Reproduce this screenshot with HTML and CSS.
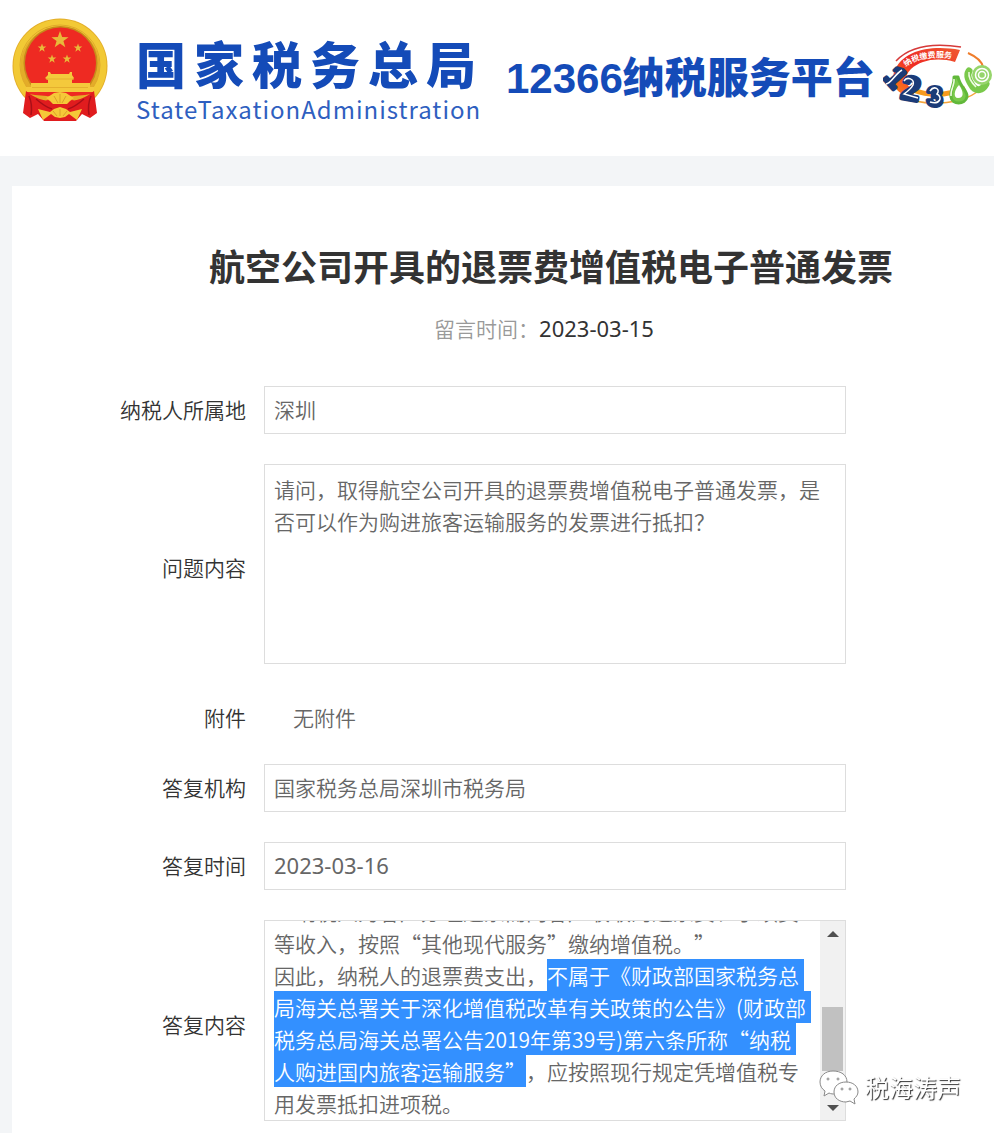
FILE: index.html
```html
<!DOCTYPE html>
<html lang="zh-CN">
<head>
    <meta charset="UTF-8">
    <meta name="viewport" content="width=device-width, initial-scale=1.0">
    <title>12366纳税服务平台</title>
    <link rel="stylesheet" href="styles.css">
    <script src="script.js" defer></script>
</head>
<body>
    <header class="header">
        <svg class="emblem" viewBox="0 0 96 104" aria-hidden="true">
            <defs>
                <path id="star" d="M0-10 2.4-3.2 9.5-3.1 3.8 1.2 5.9 8.1 0 4-5.9 8.1-3.8 1.2-9.5-3.1-2.4-3.2z"/>
            </defs>
            <circle cx="48" cy="48" r="47.500" fill="#e3ad28"/>
            <circle cx="48" cy="48" r="43" fill="none" stroke="#f2c935" stroke-width="7"/>
            <circle cx="48" cy="47" r="40" fill="none" stroke="#e0a92a" stroke-width="1"/>
            <circle cx="48.500" cy="45" r="37" fill="#c78a1b"/>
            <circle cx="48.500" cy="45" r="35.500" fill="#ee2a22"/>
            <g fill="#e8b93a">
                <use href="#star" transform="translate(48 22) scale(.9)"/>
                <use href="#star" transform="translate(30 30) scale(.45)"/>
                <use href="#star" transform="translate(66 30) scale(.45)"/>
                <use href="#star" transform="translate(40 41) scale(.45)"/>
                <use href="#star" transform="translate(55 41) scale(.45)"/>
            </g>
            <path fill="#f4c93c" d="M36 54h2l1 2h18l1-2h2v3l2 3-2 2v3h-24v-3l-3-2 3-3zM19 65h59v4h4v5H14v-5h5z"/>
            <path d="M34 61h28M20 69.500h56" stroke="#e5b02e" stroke-width="1"/>
            <path fill="#ee2a22" d="M14 74h68l-8 9H22z"/>
            <path fill="#e5ae29" d="M17 76c8 2 16 1 23 3l-8 5c-6-1-11-4-15-8zM79 76c-8 2-16 1-23 3l8 5c6-1 11-4 15-8z"/>
            <path fill="#e01c1e" d="M14 73c8 7 18 10 26 10h16c8 0 18-3 26-10l3 22-7 5-8-4-6 7H32l-6-7-8 4-7-5z"/>
            <path d="M17 78c3 7 3 13 2 19M79 78c-3 7-3 13-2 19M24 81c7 6 12 9 16 10M72 81c-7 6-12 9-16 10" fill="none" stroke="#a90f18" stroke-width="1.500"/>
            <path fill="#f5c838" d="M34 80l5-3 3-2 6-1 6 1 3 2 5 3-4 3-3 3h-14l-3-3zM26 91l12 3 4-3 6-2 6 2 4 3 12-3-5 11-8-6-4 3-5 1-5-1-4-3-8 6z"/>
            <path d="M42 78l4 7M48 76v9M54 78l-4 7M41 93l4 5M48 91v7M55 93l-4 5" stroke="#dba02a"/>
        </svg>
        <div class="brand">
            <div class="brand-cn">国家税务总局</div>
            <div class="brand-en">StateTaxationAdministration</div>
        </div>
        <div class="platform"><span class="platform-number">12366</span>纳税服务平台</div>
        <svg class="logo" viewBox="0 0 112 66" aria-hidden="true">
            <defs>
                <path id="arc" d="M23 23Q38 10 74 15"/>
                <linearGradient id="flame" x1="0" y1="1" x2="1" y2="0">
                    <stop offset="0" stop-color="#ff8a1a"/>
                    <stop offset=".5" stop-color="#ee2b24"/>
                    <stop offset="1" stop-color="#f05a30"/>
                </linearGradient>
            </defs>
            <path d="M13 17C28 1 52-1 78 3" fill="none" stroke="#d63a3a" stroke-width="1.500"/>
            <path fill="url(#flame)" d="M11 28C20 5 50 1 77 6l-5 12C54 13 38 16 28 25c-8 8-6 17 4 22l-3 7C13 50 8 40 11 28z"/>
            <path d="M85 9c9 4 14 9 15 14" fill="none" stroke="#ef7d2c" stroke-width="2"/>
            <path d="M30 46c16 6 34 6 52-2" fill="none" stroke="#f69a1e" stroke-width="5"/>
            <path d="M32 57c18 4 46 3 62-9" fill="none" stroke="#f5a43a" stroke-width="1.500"/>
            <text class="logo-arc"><textPath href="#arc">纳税缴费服务</textPath></text>
            <g class="logo-digit">
                <text transform="translate(0 34) rotate(48)" font-size="29">1</text>
                <text transform="translate(17 54) rotate(10)" font-size="33">2</text>
                <text transform="translate(44 62)" font-size="28">3</text>
            </g>
            <path d="M3 40c5 0 8-9 16-14M21 37c3-5 11-2 9 4-2 4-5 6-9 9l14 4M47 47c4-6 11-2 7 3 6 3 3 11-7 8" fill="none" stroke="#ffffff" stroke-width="1.500"/>
            <path d="M71 33c1 7-4 12-3 20 1 8 14 8 16 0 1-6-7-10-9-20z" fill="#7ac94b" stroke="#61b83a" stroke-width="3" stroke-linejoin="round"/>
            <path d="M76 41c-5 5-6 13-1 13 6 0 6-6 1-13z" fill="#ffffff"/>
            <path d="M86 27c-3 5 0 10 4 16 4 4 9 4 13-3" fill="none" stroke="#7ac94b" stroke-width="7" stroke-linecap="round"/>
            <circle cx="99" cy="31" r="10" fill="#96d56b"/>
            <circle cx="99" cy="31" r="6.500" fill="none" stroke="#ffffff" stroke-width="1.500"/>
            <circle cx="99" cy="31" r="3.500" fill="none" stroke="#ffffff" stroke-width="1.500"/>
            <path d="M71 35c1 6-4 11-3 17M86 28c-1 6 3 11 7 15" fill="none" stroke="#eefbe0" stroke-width="1.500"/>
        </svg>
    </header>

    <main class="card">
        <h1 class="title">航空公司开具的退票费增值税电子普通发票</h1>
        <p class="date">留言时间：<span class="date-value">2023-03-15</span></p>

        <form class="form">
            <label for="area">纳税人所属地</label>
            <input type="text" id="area" value="深圳" readonly>

            <label for="question" class="label-tall">问题内容</label>
            <textarea id="question" readonly>请问，取得航空公司开具的退票费增值税电子普通发票，是否可以作为购进旅客运输服务的发票进行抵扣？</textarea>

            <label for="attachment" class="attachment">附件</label>
            <output id="attachment" class="attachment attachment-value">无附件</output>

            <label for="office">答复机构</label>
            <input type="text" id="office" value="国家税务总局深圳市税务局" readonly>

            <label for="reply-date">答复时间</label>
            <input type="text" id="reply-date" value="2023-03-16" readonly>

            <label for="reply" class="label-tall">答复内容</label>
            <div class="reply-box">
                <textarea id="reply" class="reply" readonly>国家税务总局深圳市税务局答复：
尊敬的纳税人您好！
您提交的网上留言咨询已收悉，现答复如下：
根据《财政部 税务总局关于租入固定资产进项税额
抵扣等增值税政策的通知》第二条规定：
“纳税人为客户办理退票而向客户收取的退票费、手续费等收入，按照“其他现代服务”缴纳增值税。”
因此，纳税人的退票费支出，不属于《财政部国家税务总局海关总署关于深化增值税改革有关政策的公告》(财政部税务总局海关总署公告2019年第39号)第六条所称“纳税人购进国内旅客运输服务”，应按照现行规定凭增值税专用发票抵扣进项税。
感谢您的咨询！
上述回复仅供参考。</textarea>
                <div class="scrollbar">
                    <button type="button" class="scroll-button" id="scroll-up" aria-label="向上滚动">
                        <svg viewBox="0 0 12 6" aria-hidden="true"><path d="M0 6 6 0l6 6z"/></svg>
                    </button>
                    <div class="scroll-track">
                        <div class="scroll-thumb"></div>
                    </div>
                    <button type="button" class="scroll-button" id="scroll-down" aria-label="向下滚动">
                        <svg viewBox="0 0 12 6" aria-hidden="true"><path d="M0 0 6 6l6-6z"/></svg>
                    </button>
                </div>
                <div class="watermark">
                    <svg class="wechat" viewBox="0 0 40 36" aria-hidden="true">
                        <path d="M14 1C6 1 1 6 1 12c0 4 2 7 5 9l-1 5 5-3c2 1 4 1 6 1 7 0 12-5 12-12S22 1 14 1z"/>
                        <path d="M27 12c-7 0-12 4-12 10s5 10 12 10l4-1 5 3-1-5c2-2 4-4 4-7 0-6-5-10-12-10z"/>
                        <circle cx="9" cy="9" r="1"/>
                        <circle cx="19" cy="9" r="1"/>
                        <circle cx="23" cy="19" r="1"/>
                        <circle cx="31" cy="19" r="1"/>
                    </svg>
                    <span>税海涛声</span>
                </div>
            </div>
        </form>
    </main>
</body>
</html>
```

FILE: styles.css
```css
* {
    box-sizing: border-box;
}

body {
    margin: 0;
    min-height: 100vh;
    background-color: #f3f5f7;
    color: #333333;
    font-family: "Noto Sans", "Noto Sans CJK SC", sans-serif;
    font-size: 21px;
    font-weight: 350;
    line-height: 32px;
    overflow-x: hidden;
}

.header {
    display: flex;
    align-items: flex-start;
    height: 156px;
    padding: 18px 0 0 12px;
    background-color: #ffffff;
    color: #144bb8;
    white-space: nowrap;
}

.emblem {
    flex: none;
    width: 96px;
    height: 104px;
}

.brand {
    flex: none;
    width: 340px;
    margin: 14px 30px 0 28px;
}

.brand-cn {
    font-family: "Noto Sans CJK SC", sans-serif;
    font-size: 50px;
    font-weight: 900;
    line-height: 60px;
    text-align: justify;
    text-align-last: justify;
}

.brand-en {
    color: #2f5fc0;
    font-family: "Noto Sans CJK SC", sans-serif;
    font-size: 24px;
    font-weight: 400;
    letter-spacing: 1px;
    line-height: 34px;
}

.platform {
    flex: none;
    margin-top: 28px;
    font-family: "Noto Sans CJK SC", sans-serif;
    font-size: 42px;
    font-weight: 900;
    line-height: 58px;
}

.platform-number {
    font-family: "Liberation Sans", sans-serif;
    font-weight: 700;
}

.logo {
    flex: none;
    width: 112px;
    height: 66px;
    margin: 26px 0 0 8px;
}

.logo-arc {
    font-family: "Noto Sans CJK SC", sans-serif;
    font-size: 8px;
    font-weight: 700;
    fill: #ffffff;
}

.logo-digit {
    fill: #1b3b78;
    stroke: #1b3b78;
    stroke-width: 4px;
    stroke-linejoin: round;
    font-family: "Liberation Sans", sans-serif;
    font-weight: 700;
}

.card {
    margin: 30px 0 0 12px;
    padding: 60px 0 12px 96px;
    background-color: #ffffff;
}

.title {
    margin: 0;
    font-size: 36px;
    font-weight: 700;
    line-height: 44px;
    text-align: center;
}

.date {
    margin: 22px 0 41px;
    padding-right: 14px;
    color: #999999;
    text-align: center;
}

.date-value {
    color: #333333;
    font-size: 22px;
    font-weight: 400;
}

.form {
    display: grid;
    grid-template-columns: 138px 1fr;
    align-items: center;
    gap: 30px 18px;
    padding-right: 148px;
}

label {
    text-align: right;
}

.label-tall {
    padding-top: 8px;
}

input,
textarea {
    display: block;
    width: 100%;
    margin: 0;
    padding: 6px 9px 8px;
    border: 1px solid #dddddd;
    border-radius: 0;
    outline: none;
    background-color: #ffffff;
    color: #666666;
    font: inherit;
}

input {
    height: 48px;
}

#reply-date {
    font-size: 22px;
    font-weight: 400;
}

textarea {
    height: 200px;
    padding: 8px 9px;
    font-family: "Noto Sans CJK SC", sans-serif;
    resize: none;
    text-spacing-trim: space-all;
}

.attachment {
    height: 40px;
    padding-top: 8px;
}

.attachment-value {
    padding-left: 29px;
    color: #666666;
}

.reply-box {
    position: relative;
    display: flex;
    height: 201px;
    border: 1px solid #dddddd;
}

.reply {
    flex: 1;
    height: 100%;
    min-width: 0;
    border: none;
}

.reply::selection {
    background-color: #3390ff;
    color: #ffffff;
}

.scrollbar {
    display: flex;
    flex: none;
    flex-direction: column;
    width: 25px;
    background-color: #f1f1f1;
}

.scroll-button {
    display: flex;
    align-items: center;
    justify-content: center;
    height: 25px;
    padding: 0;
    border: none;
    background: none;
}

.scroll-button svg {
    width: 12px;
    height: 6px;
    fill: #505050;
}

.scroll-track {
    display: flex;
    flex: 1;
    flex-direction: column;
    justify-content: flex-end;
    padding: 0 2px 24px;
}

.scroll-thumb {
    height: 64px;
    background-color: #c1c1c1;
}

.watermark {
    position: absolute;
    right: -116px;
    bottom: 14px;
    display: flex;
    align-items: center;
    gap: 6px;
    color: #ffffff;
    font-size: 24px;
    font-weight: 400;
    line-height: 36px;
    text-shadow: 1px 1px 1px #333333;
    pointer-events: none;
}

.wechat {
    width: 40px;
    height: 36px;
    fill: #ffffff;
    stroke: #888888;
    stroke-width: 1px;
}
```

FILE: script.js
```javascript
document.addEventListener('DOMContentLoaded', () => {
    const reply = document.getElementById('reply');
    const start = reply.value.indexOf('不属于');
    const end = reply.value.indexOf('，应按照');

    // Highlight the conclusion and bring it into view
    reply.focus({ preventScroll: true });
    reply.setSelectionRange(start, end);
    reply.scrollTop = 194;

    document.getElementById('scroll-up').addEventListener('click', () => reply.scrollBy(0, -32));
    document.getElementById('scroll-down').addEventListener('click', () => reply.scrollBy(0, 32));
});
```
